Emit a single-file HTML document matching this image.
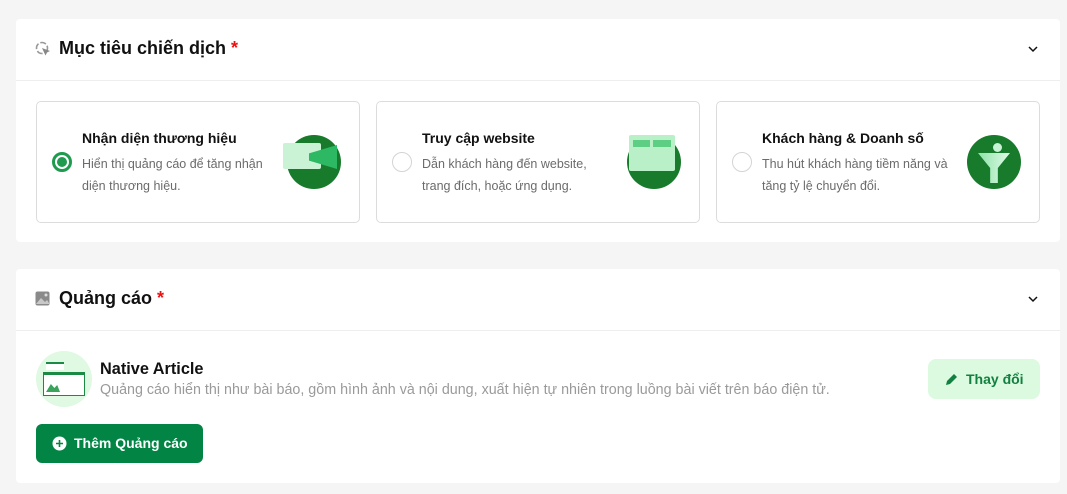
<!DOCTYPE html>
<html><head><meta charset="utf-8"><style>
*{box-sizing:border-box;margin:0;padding:0}
body{width:1067px;height:494px;background:#f5f5f5;font-family:"Liberation Sans",sans-serif;position:relative;overflow:hidden;color:#111}
.panel{position:absolute;left:16px;width:1044px;background:#fff;border-radius:4px}
.hdr{position:absolute;left:0;right:0;top:0;height:62px;border-bottom:1px solid #eeeeee}
.title{position:absolute;left:43px;font-size:18px;font-weight:bold;color:#111}
.title .st{color:#e11;}
.chev{position:absolute;right:22px;top:26px}
.card{position:absolute;top:82px;width:324px;height:122px;border:1px solid #dcdcdc;border-radius:5px}
.card h4{position:absolute;left:45px;top:28px;font-size:14px;font-weight:bold;color:#111}
.card p{position:absolute;left:45px;top:51px;font-size:12.5px;line-height:22px;color:#6b6b6b;width:190px}
.radio{position:absolute;left:15px;top:50px;width:20px;height:20px;border-radius:50%;border:1px solid #d4d4d4}
.radio.on{border:3px solid #1e9b4e}
.radio.on:after{content:"";position:absolute;left:2px;top:2px;width:10px;height:10px;border-radius:50%;background:#1e9b4e}
.ill{position:absolute;left:250px;top:33px;width:54px;height:54px;border-radius:50%;background:#187a2b}
</style></head><body>
<div class="panel" style="top:19px;height:223px">
 <div class="hdr">
  <svg style="position:absolute;left:19px;top:22px" width="16" height="16" viewBox="0 0 16 16"><circle cx="7" cy="7" r="5.5" fill="none" stroke="#999" stroke-width="1.6" stroke-dasharray="6 2"/><path d="M7 7l8 3-3 1.5-1.5 3z" fill="#888"/></svg>
  <div class="title" style="top:19px">Mục tiêu chiến dịch <span class="st">*</span></div>
  <svg class="chev" width="10" height="8" viewBox="0 0 10 8"><path d="M1 2l4 4 4-4" fill="none" stroke="#111" stroke-width="1.5"/></svg>
 </div>
 <div class="card" style="left:20px">
  <div class="radio on"></div>
  <h4>Nhận diện thương hiệu</h4>
  <p>Hiển thị quảng cáo để tăng nhận diện thương hiệu.</p>
  <div class="ill"><div style="position:absolute;left:-4px;top:8px;width:38px;height:26px;background:#c9f3d4;border-radius:2px"></div><div style="position:absolute;left:22px;top:10px;width:28px;height:24px;background:#2db864;clip-path:polygon(0 35%,100% 0,100% 100%,0 65%)"></div></div>
 </div>
 <div class="card" style="left:360px">
  <div class="radio"></div>
  <h4>Truy cập website</h4>
  <p>Dẫn khách hàng đến website, trang đích, hoặc ứng dụng.</p>
  <div class="ill"><div style="position:absolute;left:2px;top:0;width:46px;height:36px;background:#b9f0c8;border-radius:2px"></div><div style="position:absolute;left:6px;top:5px;width:17px;height:7px;background:#5fce85"></div><div style="position:absolute;left:26px;top:5px;width:18px;height:7px;background:#5fce85"></div></div>
 </div>
 <div class="card" style="left:700px">
  <div class="radio"></div>
  <h4>Khách hàng &amp; Doanh số</h4>
  <p>Thu hút khách hàng tiềm năng và tăng tỷ lệ chuyển đổi.</p>
  <div class="ill"><div style="position:absolute;left:11px;top:18px;width:32px;height:30px;background:linear-gradient(90deg,#8fe3a8,#e0fbe8);clip-path:polygon(0 0,100% 0,62% 50%,62% 100%,38% 100%,38% 50%)"></div><div style="position:absolute;left:26px;top:8px;width:9px;height:9px;border-radius:50%;background:#c8f2d4"></div></div>
 </div>
</div>
<div class="panel" style="top:269px;height:214px">
 <div class="hdr">
  <svg style="position:absolute;left:19px;top:22px" width="15" height="15" viewBox="0 0 15 15"><rect x="0.5" y="0.5" width="14" height="14" rx="2" fill="#8a8a8a"/><path d="M1 13l5-6 4 4 2-2 2 3v1H1z" fill="#c8c8c8"/><circle cx="11" cy="4" r="1.5" fill="#ddd"/></svg>
  <div class="title" style="top:19px">Quảng cáo <span class="st">*</span></div>
  <svg class="chev" width="10" height="8" viewBox="0 0 10 8"><path d="M1 2l4 4 4-4" fill="none" stroke="#111" stroke-width="1.5"/></svg>
 </div>
 <div style="position:absolute;left:20px;top:82px;width:56px;height:56px;border-radius:50%;background:#dff9e2">
  <div style="position:absolute;left:10px;top:11px;width:18px;height:8px;background:#fff;border-top:2px solid #1a8a45"></div>
  <div style="position:absolute;left:7px;top:21px;width:42px;height:24px;background:#fff;border:1px solid #1a8a45;border-top:3px solid #1a8a45"></div>
  <div style="position:absolute;left:10px;top:31px;width:14px;height:10px;background:#3aa35c;clip-path:polygon(0 100%,35% 20%,60% 60%,80% 30%,100% 100%)"></div>
 </div>
 <div style="position:absolute;left:84px;top:91px;font-size:16.3px;font-weight:bold">Native Article</div>
 <div style="position:absolute;left:84px;top:113px;font-size:14.3px;color:#9a9a9a">Quảng cáo hiển thị như bài báo, gồm hình ảnh và nội dung, xuất hiện tự nhiên trong luồng bài viết trên báo điện tử.</div>
 <div style="position:absolute;left:912px;top:90px;width:112px;height:40px;border-radius:8px;background:#dcfadf;color:#128040;font-weight:bold;font-size:14px;line-height:40px;padding-left:38px">
  <svg style="position:absolute;left:17px;top:13px" width="14" height="14" viewBox="0 0 14 14"><path d="M1 13l1-4 7-7 3 3-7 7z" fill="#128040"/></svg>Thay đổi</div>
 <div style="position:absolute;left:20px;top:155px;width:167px;height:39px;border-radius:6px;background:#028444;color:#fff;font-weight:bold;font-size:14px;line-height:39px;padding-left:38px">
  <svg style="position:absolute;left:16px;top:12px" width="15" height="15" viewBox="0 0 15 15"><circle cx="7.5" cy="7.5" r="7" fill="#fff"/><path d="M7.5 4v7M4 7.5h7" stroke="#028444" stroke-width="1.6"/></svg>Thêm Quảng cáo</div>
</div>
</body></html>
